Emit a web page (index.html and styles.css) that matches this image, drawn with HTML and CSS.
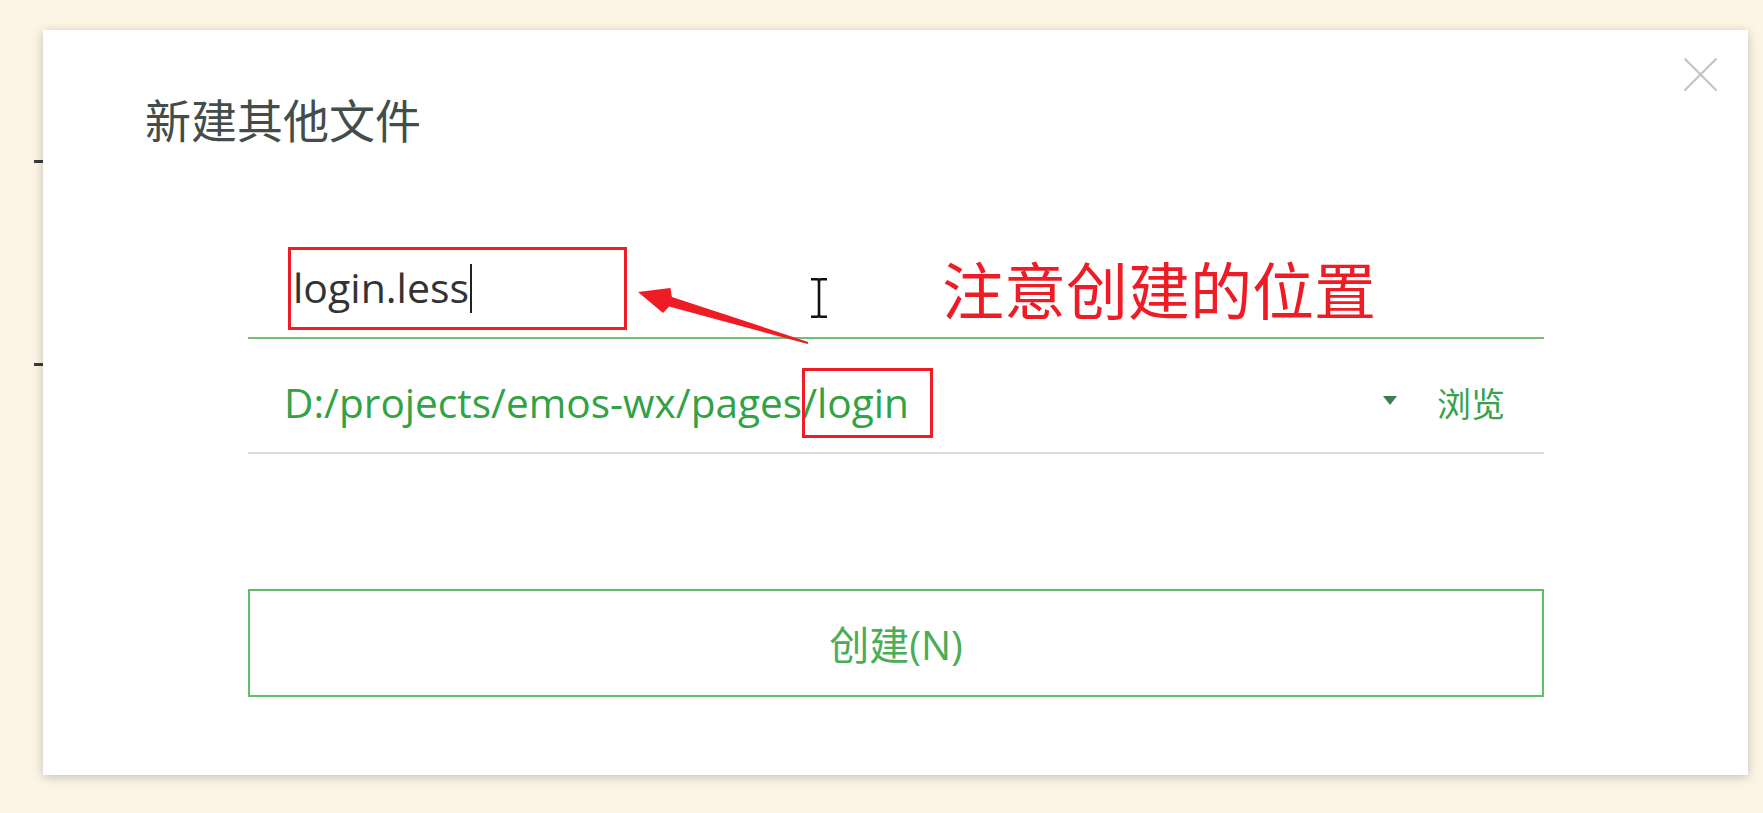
FILE: index.html
```html
<!DOCTYPE html>
<html lang="zh-CN">
<head>
<meta charset="utf-8">
<title>新建其他文件</title>
<link rel="stylesheet" href="styles.css">
</head>
<body>
<span class="peek peek-1"></span>
<span class="peek peek-2"></span>
<div class="dialog">
  <button class="close" aria-label="关闭">
    <svg width="35" height="35" viewBox="0 0 35 35"><path d="M1.5 1.5 L33.5 33.5 M33.5 1.5 L1.5 33.5" stroke="#c4c4c4" stroke-width="2.2" fill="none"/></svg>
  </button>
  <h1 class="title">新建其他文件</h1>
  <div class="form">
    <div class="name-field">login.less<span class="caret"></span></div>
    <div class="path-row">
      <span class="path">D:/projects/emos-wx/pages/login</span>
      <span class="drop"></span>
      <span class="browse">浏览</span>
    </div>
    <button class="create">创建(N)</button>
  </div>
</div>
<svg class="marks" width="1763" height="813" viewBox="0 0 1763 813">
  <rect x="289.5" y="248.5" width="336" height="80" fill="none" stroke="#ee1c25" stroke-width="3"/>
  <rect x="803.5" y="369.5" width="128" height="67" fill="none" stroke="#ee1c25" stroke-width="3"/>
  <polygon points="638,292 670.4,288.1 671.9,296.9 808.3,342 807.7,344 669.1,306.5 663,313.1" fill="#ee1c25"/>
  <path d="M819 281 V315" stroke="#111" stroke-width="2.6"/>
  <path d="M811 279.3 H817 Q819 279.3 819 281.5 Q819 279.3 821 279.3 H827" stroke="#111" stroke-width="2.4" fill="none"/>
  <path d="M811 316.7 H817 Q819 316.7 819 314.5 Q819 316.7 821 316.7 H827" stroke="#111" stroke-width="2.4" fill="none"/>
</svg>
<div class="note">注意创建的位置</div>
</body>
</html>
```

FILE: styles.css
```css
html, body {
  margin: 0;
  padding: 0;
}
body {
  width: 1763px;
  height: 813px;
  background: #fcf5e5;
  position: relative;
  overflow: hidden;
  font-family: "Open Sans", "Noto Sans CJK SC", sans-serif;
}
.peek {
  position: absolute;
  left: 34px;
  width: 9px;
  height: 3px;
  background: #3a3a3a;
}
.peek-1 { top: 160px; }
.peek-2 { top: 363px; }

.dialog {
  position: relative;
  margin: 30px 0 0 43px;
  width: 1705px;
  height: 745px;
  background: #fff;
  box-shadow: 0 2px 10px rgba(0, 0, 0, 0.22);
  padding-top: 65px;
  box-sizing: border-box;
}
.close {
  position: absolute;
  left: 1640px;
  top: 27px;
  width: 35px;
  height: 35px;
  padding: 0;
  border: 0;
  background: none;
}
.close svg { display: block; }
.title {
  margin: 0 0 0 102px;
  font-family: "Noto Sans CJK SC", sans-serif;
  font-weight: 400;
  font-size: 46px;
  line-height: 46px;
  color: #434d49;
}
.form {
  margin: 118px 0 0 205px;
  width: 1296px;
}
.name-field {
  font-size: 41px;
  line-height: 56px;
  color: #333;
  padding: 0 0 22px 45px;
  border-bottom: 2px solid #70c07b;
}
.caret {
  display: inline-block;
  width: 0;
  height: 49px;
  border-left: 2px solid #222;
  margin-left: 1px;
  vertical-align: -10px;
}
.path-row {
  display: flex;
  align-items: center;
  height: 54px;
  padding: 37px 39px 22px 36px;
  border-bottom: 2px solid #dcdcdc;
}
.path {
  flex: 1;
  font-size: 40.6px;
  line-height: 54px;
  color: #31a245;
}
.drop {
  width: 0;
  height: 0;
  border-left: 7px solid transparent;
  border-right: 7px solid transparent;
  border-top: 9px solid #3b7d53;
  margin: 0 40px 5px 0;
}
.browse {
  font-family: "Noto Sans CJK SC", sans-serif;
  font-size: 34px;
  line-height: 54px;
  color: #39a149;
}
.create {
  display: block;
  margin-top: 135px;
  width: 100%;
  height: 108px;
  box-sizing: border-box;
  background: #fff;
  border: 2px solid #62bd6c;
  font-family: "Open Sans", "Noto Sans CJK SC", sans-serif;
  font-size: 40px;
  color: #4aad57;
  padding: 0;
}
.marks {
  position: absolute;
  left: 0;
  top: 0;
  pointer-events: none;
}
.note {
  position: absolute;
  left: 942px;
  top: 257px;
  font-family: "Noto Sans CJK SC", sans-serif;
  font-size: 62px;
  line-height: 62px;
  color: #ee1c25;
  white-space: nowrap;
}
```
